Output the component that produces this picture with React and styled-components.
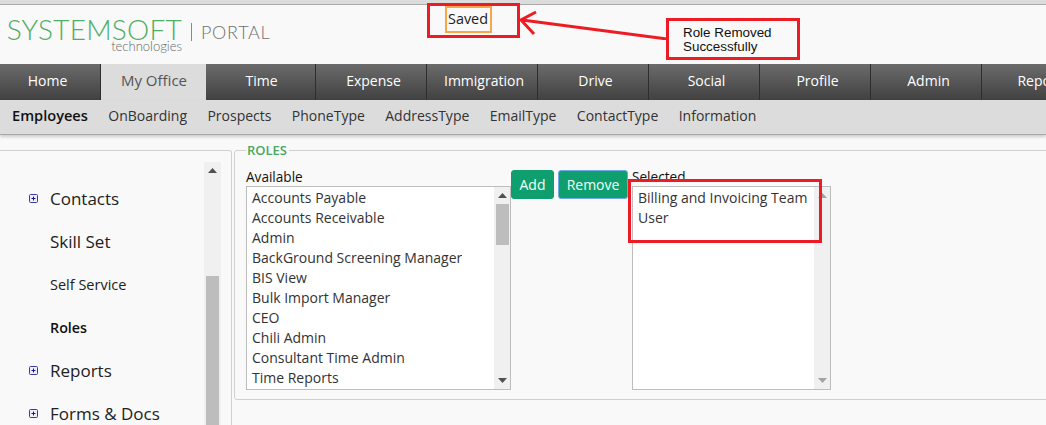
import React from "react";
import styled, { createGlobalStyle } from "styled-components";

const GlobalStyle = createGlobalStyle`
  html, body {
    margin: 0;
    padding: 0;
    width: 1046px;
    height: 425px;
    overflow: hidden;
    background: #f9f9f9;
    font-family: "Open Sans", sans-serif;
  }
`;

const Page = styled.div`
  position: relative;
  width: 1046px;
  height: 425px;
  overflow: hidden;
`;

const TopStrip = styled.div`
  height: 4px;
  background: #dcdcdc;
  border-bottom: 1px solid #a9a9a9;
`;

const Header = styled.header`
  display: flex;
  height: 59px;
  background: #f9f9f9;
`;

const LogoBlock = styled.div`
  display: flex;
  flex-direction: column;
  align-items: flex-end;
  width: 174px;
  margin-left: 8px;
  padding-top: 11px;
`;

const LogoName = styled.span`
  font-family: Lato, sans-serif;
  font-weight: 300;
  font-size: 28px;
  line-height: 26px;
  letter-spacing: 0.25px;
  color: #4fae62;
  white-space: nowrap;
`;

const LogoSub = styled.span`
  font-family: Lato, sans-serif;
  font-weight: 300;
  font-size: 13px;
  line-height: 11px;
  margin-top: -1px;
  color: #666;
`;

const LogoDivider = styled.div`
  width: 1px;
  height: 18px;
  margin: 18px 0 0 9px;
  background: #888;
`;

const PortalName = styled.span`
  width: 70px;
  margin: 15px 0 0 9px;
  font-family: Lato, sans-serif;
  font-weight: 300;
  font-size: 18px;
  line-height: 24px;
  letter-spacing: 0.7px;
  color: #707070;
`;

const SavedMessage = styled.span`
  align-self: flex-start;
  margin: 1px 0 0 174px;
  padding: 0 2px 0 1px;
  height: 23px;
  border: 2px solid #f7a64a;
  font-size: 14.4px;
  line-height: 22px;
  color: #222;
`;

const Nav = styled.nav`
  display: flex;
  height: 36px;
  background: linear-gradient(#6b6b6b, #414141);
`;

const Tab = styled.a`
  flex: none;
  box-sizing: border-box;
  width: ${(p) => p.$width}px;
  padding: 0 ${(p) => p.$endPad || 0}px 0 ${(p) => p.$startPad || 0}px;
  border-right: 1px solid ${(p) => (p.$active ? "transparent" : "#2e2e2e")};
  background: ${(p) => (p.$active ? "#dcdcdc" : "transparent")};
  color: ${(p) => (p.$active ? "#555" : "#fff")};
  font-size: ${(p) => (p.$active ? 15 : 14)}px;
  line-height: 33px;
  text-align: center;
  overflow: hidden;
  white-space: nowrap;
`;

const SubNav = styled.div`
  display: flex;
  align-items: center;
  gap: 20.4px;
  height: 35px;
  padding: 0 0 4px 12px;
  box-sizing: border-box;
  background: #dcdcdc;
  border-bottom: 1px solid #a8a8a8;
  box-shadow: 0 2px 3px rgba(0, 0, 0, 0.18);
  position: relative;
`;

const SubLink = styled.a`
  font-size: ${(p) => (p.$active ? 14.6 : 14)}px;
  font-weight: ${(p) => (p.$active ? 600 : 400)};
  color: ${(p) => (p.$active ? "#111" : "#333")};
`;

const Main = styled.div`
  display: flex;
  align-items: flex-start;
  gap: 2px;
  padding-top: 15px;
`;

const SidePanel = styled.aside`
  display: flex;
  justify-content: space-between;
  box-sizing: border-box;
  flex: none;
  width: 232px;
  height: 290px;
  padding: 11px 10px 0 0;
  border: 1px solid #d0d0d0;
  border-left: 0;
  border-radius: 0 3px 0 0;
`;

const SideList = styled.ul`
  list-style: none;
  margin: 0;
  padding: 15px 0 0 29px;
`;

const SideItem = styled.li`
  display: flex;
  align-items: center;
  height: 43px;
  padding-left: ${(p) => (p.$icon ? 0 : 21)}px;
  gap: 12px;
  font-size: ${(p) => (p.$active ? 14.3 : p.$small ? 14.5 : 17)}px;
  font-weight: ${(p) => (p.$active ? 600 : 400)};
  color: ${(p) => (p.$active ? "#111" : "#222")};
  white-space: nowrap;
`;

const ExpandIcon = styled.svg`
  flex: none;
  width: 9px;
  height: 9px;
`;

const Track = styled.div`
  display: flex;
  flex-direction: column;
  align-items: center;
  flex: none;
  width: ${(p) => p.$width}px;
  background: #f0f0f0;
`;

const Arrow = styled.svg`
  flex: none;
  width: 9px;
  height: 5px;
  margin: 6px 0;
  fill: ${(p) => (p.$muted ? "#a3a3a3" : "#505050")};
`;

const Thumb = styled.div`
  flex: none;
  width: 13px;
  height: ${(p) => p.$height}px;
  margin-top: ${(p) => p.$offset}px;
  background: #bdbdbd;
`;

const Spacer = styled.div`
  flex: 1;
`;

const RolesSet = styled.fieldset`
  flex: none;
  box-sizing: border-box;
  width: 840px;
  height: 253px;
  margin: -3px 0 0;
  padding: 0 0 0 11px;
  border: 1px solid #d0d0d0;
  border-radius: 3px;
`;

const RolesLegend = styled.legend`
  margin-left: 0;
  padding: 0 2px 0 1px;
  font-size: 13px;
  font-weight: 600;
  line-height: 7px;
  color: #4aa862;
`;

const RolesRow = styled.div`
  display: flex;
  align-items: flex-start;
  padding-top: 14px;
`;

const ListColumn = styled.div`
  display: flex;
  flex-direction: column;
  width: ${(p) => p.$width}px;
  margin-left: ${(p) => p.$gap || 0}px;
`;

const ListLabel = styled.label`
  font-size: 13.6px;
  line-height: 18px;
  height: 18px;
  color: #111;
`;

const ListBox = styled.div`
  display: flex;
  justify-content: space-between;
  box-sizing: border-box;
  height: 204px;
  background: #fff;
  border: 1px solid #bdbdbd;
`;

const Options = styled.div`
  padding: 1px 0 0 5px;
  overflow: hidden;
`;

const Option = styled.div`
  font-size: 14px;
  line-height: 20px;
  color: #333;
  white-space: nowrap;
`;

const Button = styled.button`
  box-sizing: border-box;
  height: 29px;
  margin-top: 2px;
  padding: 0;
  width: ${(p) => p.$width}px;
  margin-left: ${(p) => p.$gap}px;
  border: 1px solid ${(p) => (p.$focused ? "#6fa9e8" : "#0f9f6e")};
  border-radius: 3px;
  background: #0f9f6e;
  color: #f4fff9;
  font-family: inherit;
  font-size: 14px;
`;

const RedBox = styled.div`
  position: absolute;
  box-sizing: border-box;
  left: ${(p) => p.$x}px;
  top: ${(p) => p.$y}px;
  width: ${(p) => p.$w}px;
  height: ${(p) => p.$h}px;
  border: 3px solid #ed1c24;
`;

const CalloutBox = styled(RedBox)`
  padding: 5px 0 0 14px;
  background: #f9f9f9;
  font-family: "Liberation Sans", sans-serif;
  font-size: 13.4px;
  line-height: 14px;
  color: #111;
`;

const CalloutArrow = styled.svg`
  position: absolute;
  left: 515px;
  top: 8px;
  width: 155px;
  height: 32px;
  fill: none;
  stroke: #ed1c24;
  stroke-width: 3;
`;

const tabs = [
  { label: "Home", width: 101, endPad: 5 },
  { label: "My Office", width: 105, startPad: 2, active: true },
  { label: "Time", width: 110, startPad: 2 },
  { label: "Expense", width: 111, startPad: 5 },
  { label: "Immigration", width: 111, startPad: 4 },
  { label: "Drive", width: 111, startPad: 5 },
  { label: "Social", width: 111, startPad: 5 },
  { label: "Profile", width: 111, startPad: 5 },
  { label: "Admin", width: 111, startPad: 5 },
  { label: "Report", width: 111, startPad: 5 },
];

const subLinks = [
  "OnBoarding",
  "Prospects",
  "PhoneType",
  "AddressType",
  "EmailType",
  "ContactType",
  "Information",
];

const available = [
  "Accounts Payable",
  "Accounts Receivable",
  "Admin",
  "BackGround Screening Manager",
  "BIS View",
  "Bulk Import Manager",
  "CEO",
  "Chili Admin",
  "Consultant Time Admin",
  "Time Reports",
];

const UpArrow = (props) => (
  <Arrow viewBox="0 0 9 5" {...props}>
    <path d="M4.5 0 9 5H0z" />
  </Arrow>
);

const DownArrow = (props) => (
  <Arrow viewBox="0 0 9 5" {...props}>
    <path d="M0 0h9L4.5 5z" />
  </Arrow>
);

const Expand = () => (
  <ExpandIcon viewBox="0 0 9 9">
    <rect x="0.5" y="0.5" width="8" height="8" rx="1" fill="#eef" stroke="#3a3a9c" />
    <path d="M2.5 4.5h4M4.5 2.5v4" stroke="#1a1a8c" />
  </ExpandIcon>
);

export default function App() {
  return (
    <Page>
      <GlobalStyle />
      <TopStrip />
      <Header>
        <LogoBlock>
          <LogoName>SYSTEMSOFT</LogoName>
          <LogoSub>technologies</LogoSub>
        </LogoBlock>
        <LogoDivider />
        <PortalName>PORTAL</PortalName>
        <SavedMessage>Saved</SavedMessage>
      </Header>
      <Nav>
        {tabs.map((tab) => (
          <Tab
            key={tab.label}
            $width={tab.width}
            $startPad={tab.startPad}
            $endPad={tab.endPad}
            $active={tab.active}
          >
            {tab.label}
          </Tab>
        ))}
      </Nav>
      <SubNav>
        <SubLink $active>Employees</SubLink>
        {subLinks.map((label) => (
          <SubLink key={label}>{label}</SubLink>
        ))}
      </SubNav>
      <Main>
        <SidePanel>
          <SideList>
            <SideItem $icon>
              <Expand />
              Contacts
            </SideItem>
            <SideItem>Skill Set</SideItem>
            <SideItem $small>Self Service</SideItem>
            <SideItem $small $active>
              Roles
            </SideItem>
            <SideItem $icon>
              <Expand />
              Reports
            </SideItem>
            <SideItem $icon>
              <Expand />
              Forms &amp; Docs
            </SideItem>
          </SideList>
          <Track $width={17}>
            <UpArrow />
            <Thumb $height={150} $offset={97} />
          </Track>
        </SidePanel>
        <RolesSet>
          <RolesLegend>ROLES</RolesLegend>
          <RolesRow>
            <ListColumn $width={265}>
              <ListLabel>Available</ListLabel>
              <ListBox>
                <Options>
                  {available.map((role) => (
                    <Option key={role}>{role}</Option>
                  ))}
                </Options>
                <Track $width={16}>
                  <UpArrow />
                  <Thumb $height={41} $offset={0} />
                  <Spacer />
                  <DownArrow />
                </Track>
              </ListBox>
            </ListColumn>
            <Button $width={43} $gap={0}>
              Add
            </Button>
            <Button $width={70} $gap={4} $focused>
              Remove
            </Button>
            <ListColumn $width={199} $gap={4}>
              <ListLabel>Selected</ListLabel>
              <ListBox>
                <Options>
                  <Option>Billing and Invoicing Team</Option>
                  <Option>User</Option>
                </Options>
                <Track $width={16}>
                  <UpArrow $muted />
                  <Spacer />
                  <DownArrow $muted />
                </Track>
              </ListBox>
            </ListColumn>
          </RolesRow>
        </RolesSet>
      </Main>
      <RedBox $x={427} $y={3} $w={93} $h={35} />
      <RedBox $x={628} $y={179} $w={194} $h={64} />
      <CalloutArrow viewBox="0 0 155 32">
        <path d="M152 31 7 12M21 4 6 12l13 14" />
      </CalloutArrow>
      <CalloutBox $x={666} $y={18} $w={134} $h={42}>
        Role Removed
        <br />
        Successfully
      </CalloutBox>
    </Page>
  );
}
